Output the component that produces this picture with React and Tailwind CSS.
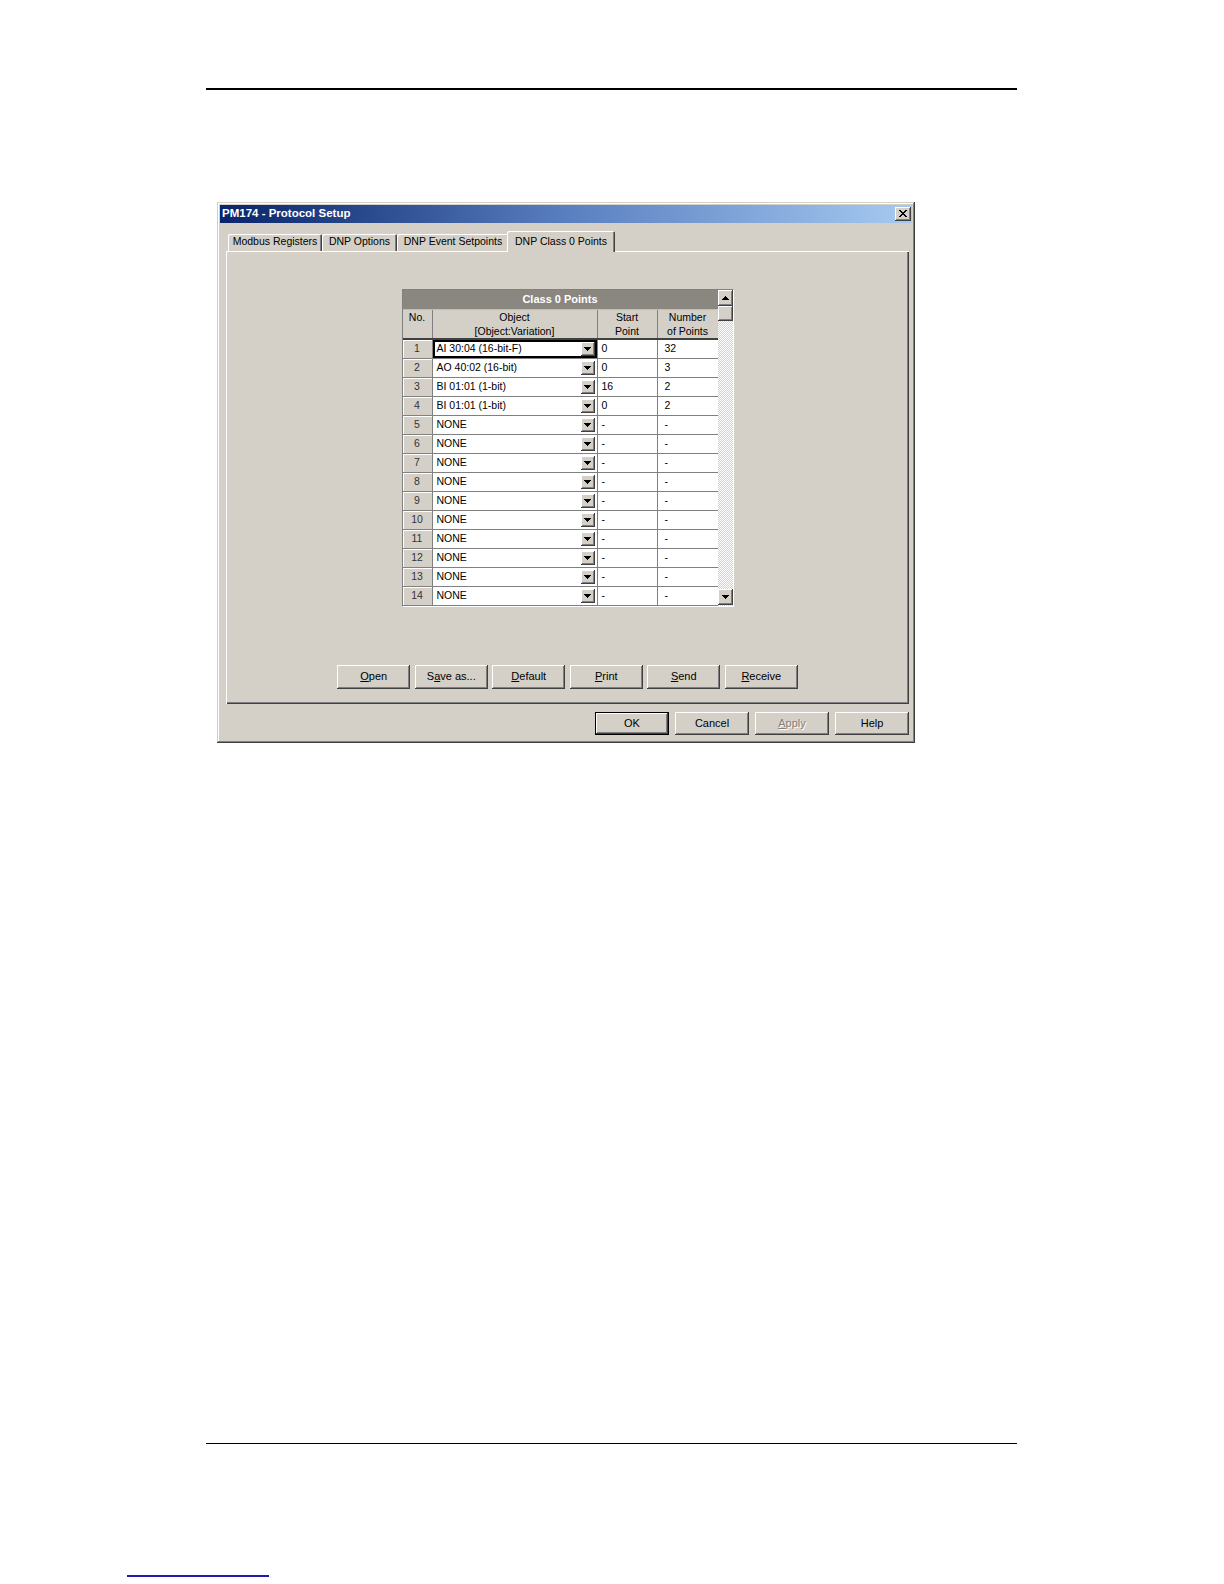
import React from 'react';

const raised =
  'shadow-[inset_-1px_-1px_#404040,inset_1px_1px_#ffffff,inset_-2px_-2px_#808080,inset_2px_2px_#d4d0c8]';

const rows = [
  { no: 1, obj: 'AI 30:04 (16-bit-F)', start: '0', count: '32' },
  { no: 2, obj: 'AO 40:02 (16-bit)', start: '0', count: '3' },
  { no: 3, obj: 'BI 01:01 (1-bit)', start: '16', count: '2' },
  { no: 4, obj: 'BI 01:01 (1-bit)', start: '0', count: '2' },
  ...Array.from({ length: 10 }, (_, i) => ({ no: i + 5, obj: 'NONE', start: '-', count: '-' })),
];

const tabs = ['Modbus Registers', 'DNP Options', 'DNP Event Setpoints'];
const tabWidths = ['w-[94px]', 'w-[75px]', 'w-[112px]'];

const ArrowDown = () => (
  <svg width="7" height="4" viewBox="0 0 7 4" shapeRendering="crispEdges">
    <path d="M0 0h7v1h-1v1h-1v1h-1v1h-1v-1h-1v-1h-1v-1h-1z" fill="#000" />
  </svg>
);

const ArrowUp = () => (
  <svg width="7" height="4" viewBox="0 0 7 4" shapeRendering="crispEdges">
    <path d="M3 0h1v1h1v1h1v1h1v1h-7v-1h1v-1h1v-1h1z" fill="#000" />
  </svg>
);

const Mn = ({ children }) => <span className="underline underline-offset-[1px]">{children}</span>;

const PanelButton = ({ children }) => (
  <button className={`w-[73px] h-[24px] bg-[#d4d0c8] text-[11px] text-black flex items-center justify-center ${raised}`}>
    {children}
  </button>
);

const App = () => {
  return (
    <div className="w-[1224px] h-[1584px] bg-white overflow-hidden flex flex-col items-start font-['Liberation_Sans',Arial,sans-serif]">
      {/* page header rule */}
      <div className="mt-[88px] ml-[206px] w-[811px] h-[1.5px] bg-black" />

      {/* dialog */}
      <div className="mt-[112px] ml-[217px] w-[698px] h-[541px] bg-[#d4d0c8] p-[3px] flex flex-col shadow-[inset_-1px_-1px_#404040,inset_1px_1px_#d4d0c8,inset_-2px_-2px_#808080,inset_2px_2px_#ffffff]">
        {/* title bar */}
        <div className="h-[18px] bg-linear-to-r from-[#0a246a] via-[#5a7fc0] to-[#a6caf0] flex items-center justify-between pl-[2px] pr-[1px]">
          <span className="text-white font-bold text-[11.5px] leading-none">PM174 - Protocol Setup</span>
          <button className={`w-[16px] h-[14px] bg-[#d4d0c8] flex items-center justify-center ${raised}`}>
            <svg width="8" height="7" viewBox="0 0 8 7" shapeRendering="crispEdges">
              <path
                d="M0 0h2v1h1v1h2v-1h1v-1h2v1h-1v1h-1v1h-1v1h1v1h1v1h1v1h-2v-1h-1v-1h-2v1h-1v1h-2v-1h1v-1h1v-1h1v-1h-1v-1h-1v-1h-1z"
                fill="#000"
              />
            </svg>
          </button>
        </div>

        {/* tabs */}
        <div className="mt-[8px] ml-[8px] h-[20px] flex items-end relative z-10">
          {tabs.map((t, i) => (
            <div
              key={t}
              className={`${tabWidths[i]} h-[17px] flex items-center justify-center text-[10.5px] text-black rounded-t-[2px] shadow-[inset_1px_1px_#ffffff,inset_-1px_0_#404040,inset_-2px_0_#808080]`}
            >
              {t}
            </div>
          ))}
          <div className="-ml-[2px] w-[108px] h-[21px] -mb-px bg-[#d4d0c8] flex items-start pt-[3px] justify-center text-[10.5px] text-black rounded-t-[2px] shadow-[inset_1px_1px_#ffffff,inset_-1px_0_#404040,inset_-2px_0_#808080]">
            DNP Class 0 Points
          </div>
        </div>

        {/* tab panel */}
        <div className="ml-[6px] mr-[3px] h-[453px] flex flex-col items-center shadow-[inset_1px_1px_#ffffff,inset_-1px_-1px_#404040,inset_-2px_-2px_#808080]">
          {/* grid */}
          <div className="mt-[38px] w-[332px] h-[318px] border border-t-[#808080] border-l-[#808080] border-b-white border-r-white bg-[#d4d0c8] flex overflow-hidden">
            <div className="w-[315px] flex flex-col overflow-hidden">
              <div className="h-[20px] shrink-0 bg-[#8a8680] flex items-center justify-center text-white font-bold text-[11px] border-b border-[#c0bdb6]">
                Class 0 Points
              </div>
              <div className="h-[30px] shrink-0 grid grid-cols-[30px_165px_60px_60px] border-b-[2px] border-[#404040] text-[10.5px] leading-[14px] text-black">
                <div className="border-r border-[#808080] flex justify-center">No.</div>
                <div className="border-r border-[#808080] flex flex-col items-center">
                  <span>Object</span>
                  <span>[Object:Variation]</span>
                </div>
                <div className="border-r border-[#808080] flex flex-col items-center">
                  <span>Start</span>
                  <span>Point</span>
                </div>
                <div className="flex flex-col items-center">
                  <span>Number</span>
                  <span>of Points</span>
                </div>
              </div>
              {rows.map((r) => (
                <div key={r.no} className="h-[19px] shrink-0 grid grid-cols-[30px_165px_60px_60px] text-[10.5px] text-black">
                  <div className="bg-[#d4d0c8] flex items-center justify-center text-[#333] border-r border-b border-[#808080] shadow-[inset_1px_1px_#ffffff]">
                    {r.no}
                  </div>
                  <div
                    className={`bg-white flex items-center justify-between pl-[4px] pr-[2px] border-r border-b border-[#808080] ${
                      r.no === 1 ? 'shadow-[inset_0_0_0_2px_#000]' : ''
                    }`}
                  >
                    <span>{r.obj}</span>
                    <span className={`w-[14px] h-[14px] bg-[#d4d0c8] flex items-center justify-center ${raised}`}>
                      <ArrowDown />
                    </span>
                  </div>
                  <div className="bg-white flex items-center pl-[4px] border-r border-b border-[#808080]">{r.start}</div>
                  <div className="bg-white flex items-center pl-[7px] border-b border-[#808080]">{r.count}</div>
                </div>
              ))}
              <div className="flex-1 grid grid-cols-[30px_165px_60px_60px]">
                <div className="bg-[#d4d0c8] border-r border-[#808080]" />
                <div className="bg-white border-r border-[#808080]" />
                <div className="bg-white border-r border-[#808080]" />
                <div className="bg-white" />
              </div>
            </div>

            {/* scrollbar */}
            <div className="w-[15px] flex flex-col bg-[image:repeating-conic-gradient(#d4d0c8_0%_25%,#ffffff_0%_50%)] bg-[length:2px_2px]">
              <div className={`h-[16px] shrink-0 bg-[#d4d0c8] flex items-center justify-center ${raised}`}>
                <ArrowUp />
              </div>
              <div className={`h-[15px] shrink-0 bg-[#d4d0c8] ${raised}`} />
              <div className="flex-1" />
              <div className={`h-[16px] shrink-0 bg-[#d4d0c8] flex items-center justify-center ${raised}`}>
                <ArrowDown />
              </div>
              <div className="h-[1px] shrink-0" />
            </div>
          </div>

          {/* panel buttons */}
          <div className="mt-[58px] flex gap-[4.5px]">
            <PanelButton><Mn>O</Mn>pen</PanelButton>
            <PanelButton>S<Mn>a</Mn>ve as...</PanelButton>
            <PanelButton><Mn>D</Mn>efault</PanelButton>
            <PanelButton><Mn>P</Mn>rint</PanelButton>
            <PanelButton><Mn>S</Mn>end</PanelButton>
            <PanelButton><Mn>R</Mn>eceive</PanelButton>
          </div>
        </div>

        {/* dialog buttons */}
        <div className="mt-[8px] flex justify-end gap-[6px] pr-[3px]">
          <button className="w-[74px] h-[23px] bg-[#d4d0c8] text-[11px] text-black shadow-[inset_0_0_0_1px_#000000,inset_-2px_-2px_#404040,inset_2px_2px_#ffffff,inset_-3px_-3px_#808080]">
            OK
          </button>
          <button className={`w-[74px] h-[23px] bg-[#d4d0c8] text-[11px] text-black ${raised}`}>Cancel</button>
          <button className={`w-[74px] h-[23px] bg-[#d4d0c8] text-[11px] text-[#808080] [text-shadow:1px_1px_0_#ffffff] ${raised}`}>
            <Mn>A</Mn>pply
          </button>
          <button className={`w-[74px] h-[23px] bg-[#d4d0c8] text-[11px] text-black ${raised}`}>Help</button>
        </div>
      </div>

      {/* page footer rule */}
      <div className="mt-[700px] ml-[206px] w-[811px] h-[1.5px] bg-black" />

      {/* footer link underline */}
      <div className="mt-[131px] ml-[127px] w-[142px] h-[1.5px] bg-[#1c1ca8]" />
    </div>
  );
};

export default App;
